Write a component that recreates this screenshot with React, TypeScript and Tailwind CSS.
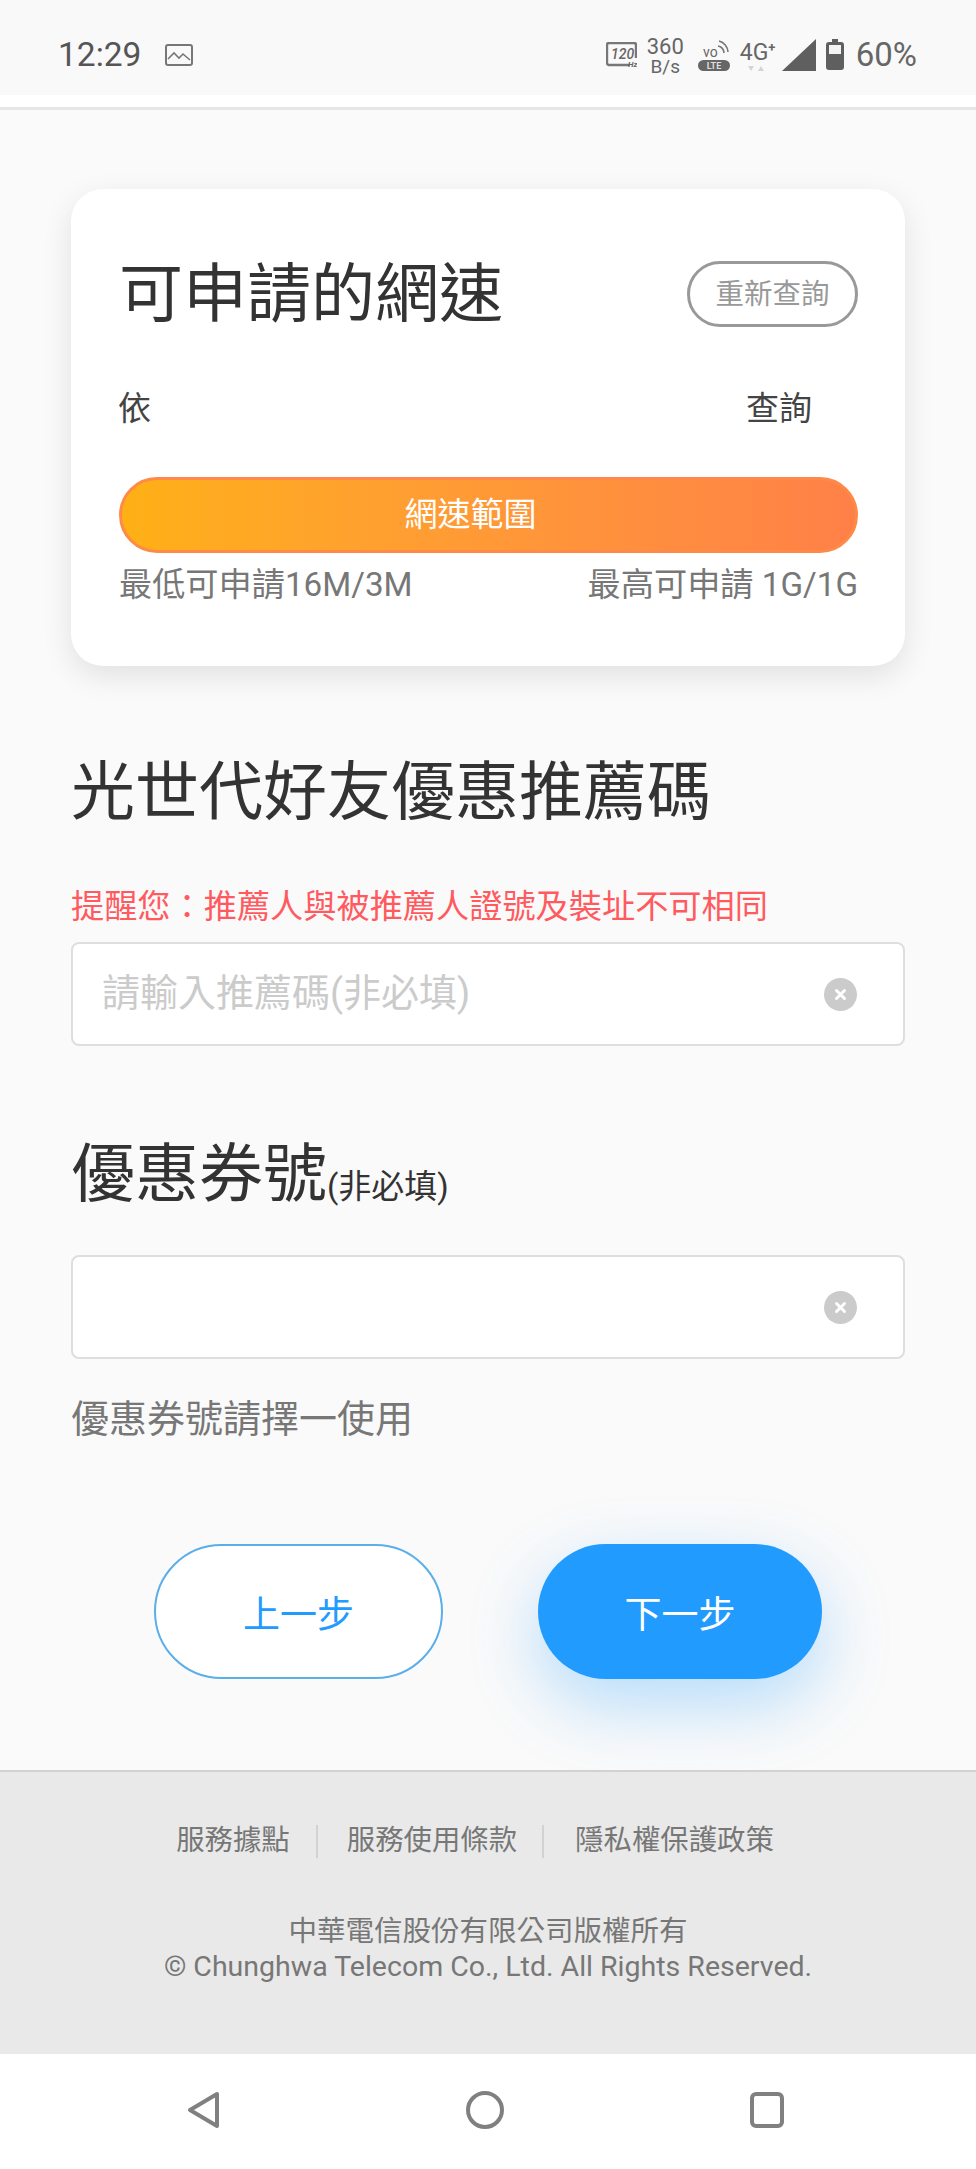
import React from 'react';

const ClearIcon = () => (
  <svg width="33" height="33" viewBox="0 0 33 33" className="shrink-0">
    <circle cx="16.5" cy="16.5" r="16.5" fill="#cbcbcb" />
    <path d="M12.5 12.5l8 8M20.5 12.5l-8 8" stroke="#fff" strokeWidth="3" strokeLinecap="round" />
  </svg>
);

const StatusIcons = () => (
  <div className="flex items-center h-full text-[#666]">
    {/* 120Hz */}
    <svg width="31" height="26" viewBox="0 0 31 26" className="mt-[1px]">
      <path d="M24 23H3a2 2 0 0 1-2-2V3a2 2 0 0 1 2-2h25a2 2 0 0 1 2 2v13" fill="none" stroke="#777" strokeWidth="2.4" />
      <text x="5" y="17" fontSize="14" fontStyle="italic" fontWeight="500" fontFamily="Roboto, sans-serif" fill="#666">120</text>
      <text x="22" y="25" fontSize="8" fontStyle="italic" fontWeight="700" fontFamily="Roboto, sans-serif" fill="#666">Hz</text>
    </svg>
    {/* net speed */}
    <div className="ml-[10px] w-[37px] flex flex-col items-center mt-[4px]">
      <span className="text-[22px] leading-[20px]">360</span>
      <span className="text-[19px] leading-[19px]">B/s</span>
    </div>
    {/* VoLTE */}
    <svg width="32" height="32" viewBox="0 0 32 32" className="ml-[14px] mt-[2px]">
      <text x="5" y="17" fontSize="14" fontFamily="Roboto, sans-serif" fill="#666">vo</text>
      <path d="M20 6a7 7 0 0 1 6 7M21 1a12 12 0 0 1 9 11" fill="none" stroke="#777" strokeWidth="1.6" />
      <rect x="0" y="20" width="32" height="11" rx="5.5" fill="#666" />
      <text x="16" y="29" fontSize="9" fontWeight="700" textAnchor="middle" fontFamily="Roboto, sans-serif" fill="#ddd">LTE</text>
    </svg>
    {/* 4G+ */}
    <div className="ml-[10px] w-[34px] flex flex-col items-start mt-[-2px]">
      <span className="text-[23px] leading-[24px] whitespace-nowrap">
        4G<span className="text-[13px] align-[8px] font-bold">+</span>
      </span>
      <svg width="16" height="6" viewBox="0 0 16 6" className="ml-[8px] mt-[1px]">
        <path d="M0 0h6L3 5zM10 5h6l-3-5z" fill="#d4d4d4" />
      </svg>
    </div>
    {/* signal */}
    <svg width="34" height="32" viewBox="0 0 34 32" className="ml-[8px]">
      <path d="M34 0v32H0z" fill="#5f5f5f" />
    </svg>
    {/* battery */}
    <svg width="18" height="31" viewBox="0 0 18 31" className="ml-[10px]">
      <path d="M6 0h6v3h3a3 3 0 0 1 3 3v22a3 3 0 0 1-3 3H3a3 3 0 0 1-3-3V6a3 3 0 0 1 3-3h3z" fill="#5f5f5f" />
      <rect x="3" y="6" width="12" height="9" fill="#f4f4f4" />
    </svg>
    <span className="ml-[12px] text-[33px] leading-none">60%</span>
  </div>
);

const App: React.FC = () => {
  return (
    <div
      className="w-full h-[2169px] flex flex-col bg-[#fafafa] overflow-hidden"
      style={{ fontFamily: 'Roboto, "Noto Sans CJK TC", sans-serif' }}
    >
      {/* Status bar */}
      <div className="h-[95px] shrink-0 bg-[#f9f9f9] flex items-center justify-between pl-[58px] pr-[59px] pt-[14px]">
        <div className="flex items-center text-[#555]">
          <span className="text-[33.5px] leading-none">12:29</span>
          <svg width="28" height="22" viewBox="0 0 28 22" className="ml-[24px]">
            <rect x="1" y="1" width="26" height="20" rx="2" fill="none" stroke="#777" strokeWidth="2" />
            <path d="M3 15l6-6 5 5 4-4 7 6" fill="none" stroke="#777" strokeWidth="1.6" />
          </svg>
        </div>
        <StatusIcons />
      </div>
      <div className="h-[12px] shrink-0 bg-white" />
      <div className="h-[3px] shrink-0 bg-[#e6e6e6]" />

      <main className="flex-1 pl-[71px] pr-[71px] pt-[79px] min-h-0">
        {/* Speed card */}
        <section className="h-[477px] w-[834px] rounded-[32px] bg-white pl-[48px] pr-[47px] pt-[72px] shadow-[0_10px_30px_rgba(0,0,0,0.1)]">
          <div className="flex items-center justify-between h-[66px]">
            <h2 className="text-[64px] leading-none font-normal text-[#333] mt-[2px]">可申請的網速</h2>
            <button className="w-[171px] h-[66px] rounded-full border-[3px] border-[#999] text-[28.5px] text-[#999] pt-[2px]">
              重新查詢
            </button>
          </div>
          <div className="mt-[61px] h-[40px] flex items-center justify-between text-[33px] leading-none text-[#444]">
            <span className="ml-[-1px]">依</span>
            <span className="mr-[46px]">查詢</span>
          </div>
          <div className="mt-[49px] h-[76px] rounded-full border-[3px] border-[#ff8a47] bg-gradient-to-r from-[#ffb014] to-[#ff8047] flex items-center justify-center text-[33px] text-white pr-[36px]">
            網速範圍
          </div>
          <div className="mt-[12px] h-[40px] flex items-center justify-between text-[33.2px] leading-none text-[#777]">
            <span>最低可申請16M/3M</span>
            <span>最高可申請 1G/1G</span>
          </div>
        </section>

        {/* Referral code */}
        <h2 className="mt-[87px] h-[80px] text-[64px] leading-[80px] font-normal text-[#333]">光世代好友優惠推薦碼</h2>
        <p className="mt-[54px] h-[40px] text-[33.2px] leading-[40px] text-[#ff5a60]">提醒您：推薦人與被推薦人證號及裝址不可相同</p>
        <div className="mt-[15px] h-[104px] w-[834px] rounded-[8px] border-2 border-[#dedede] bg-white flex items-center justify-between pl-[29px] pr-[46px]">
          <span className="text-[38px] leading-none text-[#cbcbcb] mt-[-2px]">請輸入推薦碼(非必填)</span>
          <ClearIcon />
        </div>

        {/* Coupon */}
        <h2 className="mt-[86px] h-[80px] flex items-end font-normal text-[#333]">
          <span className="text-[64px] leading-[75px]">優惠券號</span>
          <span className="text-[33px] leading-[40px] mb-[5px]">(非必填)</span>
        </h2>
        <div className="mt-[43px] h-[104px] w-[834px] rounded-[8px] border-2 border-[#dedede] bg-white flex items-center justify-end pr-[46px]">
          <ClearIcon />
        </div>
        <p className="mt-[35px] h-[50px] text-[38px] leading-[50px] text-[#777]">優惠券號請擇一使用</p>

        {/* Actions */}
        <div className="mt-[100px] ml-[83px] flex gap-[95px]">
          <button className="w-[289px] h-[135px] rounded-[68px] border-2 border-[#5aaeea] bg-white text-[37px] text-[#229bff] pt-[8px]">
            上一步
          </button>
          <button className="w-[284px] h-[135px] rounded-[68px] bg-[#229bff] text-[37px] text-white pt-[8px] shadow-[0_25px_70px_rgba(34,155,255,0.32)]">
            下一步
          </button>
        </div>
      </main>

      {/* Footer */}
      <footer className="h-[284px] shrink-0 bg-[#e9e9e9] border-t-2 border-[#d2d2d2] text-[#777] flex flex-col items-center pt-[50px]">
        <div className="flex items-center justify-center h-[38px] text-[28.4px] leading-none pr-[26px]">
          <span>服務據點</span>
          <span className="ml-[26px] mr-[29px] w-[2px] h-[33px] bg-[#d2d2d2]" />
          <span>服務使用條款</span>
          <span className="ml-[25px] mr-[31px] w-[2px] h-[33px] bg-[#d2d2d2]" />
          <span>隱私權保護政策</span>
        </div>
        <div className="mt-[54px] text-center text-[28.5px] leading-[35px]">
          <p>中華電信股份有限公司版權所有</p>
          <p>© Chunghwa Telecom Co., Ltd. All Rights Reserved.</p>
        </div>
      </footer>

      {/* Nav bar */}
      <nav className="h-[115px] shrink-0 bg-white flex items-center justify-between pl-[187px] pr-[192px] pb-[3px]">
        <svg width="32" height="38" viewBox="0 0 32 38">
          <path d="M30 3v32L3 19z" fill="none" stroke="#808080" strokeWidth="4" strokeLinejoin="round" />
        </svg>
        <svg width="38" height="38" viewBox="0 0 38 38">
          <circle cx="19" cy="19" r="17" fill="none" stroke="#808080" strokeWidth="4" />
        </svg>
        <svg width="34" height="36" viewBox="0 0 34 36">
          <rect x="2" y="2" width="30" height="32" rx="4" fill="none" stroke="#808080" strokeWidth="4" />
        </svg>
      </nav>
    </div>
  );
};

export default App;
